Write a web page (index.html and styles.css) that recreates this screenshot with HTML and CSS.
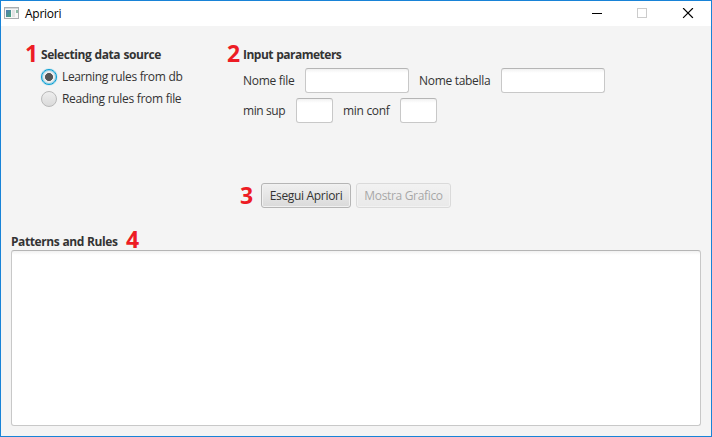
FILE: index.html
```html
<!DOCTYPE html>
<html lang="it">
<head>
<meta charset="utf-8">
<title>Apriori</title>
<link rel="stylesheet" href="styles.css">
</head>
<body>
<div class="window">
  <header class="titlebar">
    <svg class="app-icon" width="15" height="12" viewBox="0 0 15 12">
      <defs><linearGradient id="g" x1="0" y1="0" x2="1" y2="1"><stop offset="0" stop-color="#5279b5"/><stop offset="1" stop-color="#45a77c"/></linearGradient></defs>
      <rect x=".5" y=".5" width="14" height="11" fill="#f7f7f7" stroke="#a9adb0"/>
      <path d="M1 1.5h13" stroke="#d4d7d9"/>
      <rect x="2" y="3" width="5" height="7" fill="url(#g)"/>
      <rect x="8" y="3" width="3" height="7" fill="#e1e3e4"/>
      <rect x="12" y="3" width="2" height="3" fill="#8bbba6"/>
    </svg>
    <span class="title">Apriori</span>
    <svg class="controls" width="102" height="11" viewBox="0 0 102 11" fill="none">
      <path d="M0 5.5h10" stroke="#000" shape-rendering="crispEdges"/>
      <rect x="45.500" y=".5" width="9" height="9" stroke="#ccc"/>
      <path d="M91.500 .5l9 9M100.500 .5l-9 9" stroke="#000" stroke-width="1.15" stroke-linecap="square"/>
    </svg>
  </header>
  <main class="content">
    <div class="top">
      <section class="source">
        <h2><b class="num">1</b><span>Selecting data source</span></h2>
        <div class="option"><i class="radio selected"></i><span>Learning rules from db</span></div>
        <div class="option"><i class="radio"></i><span class="reading">Reading rules from file</span></div>
      </section>
      <section class="params">
        <h2><b class="num">2</b><span class="heading-input">Input parameters</span></h2>
        <div class="fields">
          <label class="l-file">Nome file</label><input class="wide">
          <label class="l-table">Nome tabella</label><input class="wide">
        </div>
        <div class="fields">
          <label class="l-sup">min sup</label><input>
          <label class="l-conf">min conf</label><input>
        </div>
      </section>
    </div>
    <div class="actions">
      <b class="num">3</b>
      <button class="run">Esegui Apriori</button>
      <button class="chart" disabled>Mostra Grafico</button>
    </div>
    <h2 class="results"><span>Patterns and Rules</span><b class="num">4</b></h2>
    <textarea></textarea>
  </main>
</div>
</body>
</html>
```

FILE: styles.css
```css
* { box-sizing: border-box; }
body { margin: 0; overflow: hidden; font: 12px/16px "Open Sans", "Noto Sans", sans-serif; color: #333; }
.window { width: 712px; height: 437px; border: 1px solid #1883d7; background: #f4f4f4; display: flex; flex-direction: column; }
.titlebar { height: 25px; flex: none; background: #fff; display: flex; align-items: flex-start; padding: 5px 17px 0 3px; color: #000; }
.app-icon { margin-top: 1px; }
.title { margin-left: 6px; letter-spacing: -.25px; }
.controls { margin-left: auto; margin-top: 2px; }
.content { flex: 1; padding: 20px 10px 10px; display: flex; flex-direction: column; }
.top { display: flex; height: 137px; flex: none; }
.source { width: 202px; padding-left: 14px; }
.params { padding-left: 14px; }
h2 { margin: 0; font-size: 12px; line-height: 18px; height: 20px; display: flex; white-space: nowrap; }
h2 span { letter-spacing: -.42px; word-spacing: .5px; }
.heading-input { letter-spacing: -.5px; }
.num { color: #ed1c24; font: 700 23px/18px "Open Sans", sans-serif; width: 16px; flex: none; margin-top: -2px; }
.option { height: 22px; display: flex; align-items: center; padding-left: 16px; white-space: nowrap; letter-spacing: -.37px; word-spacing: .2px; }
.reading { letter-spacing: -.33px; }
.radio { width: 16px; height: 16px; border-radius: 50%; border: 1px solid #b9b9b9; background: linear-gradient(#eee, #dadada); margin-right: 5px; }
.radio.selected { border-color: #039ed3; box-shadow: inset 0 0 0 1px #8fd0e8, 0 0 1px #039ed3; background: radial-gradient(circle, #555 0 3.7px, #ececec 4.3px); }
.fields { display: flex; align-items: center; height: 25px; margin: 2px 0 5px 16px; white-space: nowrap; }
.fields + .fields { margin-top: 0; }
label { flex: none; letter-spacing: -.3px; }
.l-file { width: 62px; }
.l-table { width: 82px; margin-left: 10px; }
.l-sup { width: 53px; letter-spacing: -.4px; }
.l-conf { width: 57px; margin-left: 10px; }
input { width: 37px; height: 25px; padding: 0 7px; }
.wide { width: 104px; }
input, textarea { border: 1px solid #c8c8c8; border-top-color: #b5b5b5; border-radius: 3px; background: #fff linear-gradient(#f1f1f1, #fff 4px) no-repeat; outline: 0; margin: 0; }
.actions { display: flex; align-items: center; height: 25px; margin: 0 0 0 229px; flex: none; }
.actions .num { width: 21px; }
button { height: 25px; padding: 0; font: inherit; color: #333; white-space: nowrap; border: 1px solid #b5b5b5; border-radius: 3px; background: linear-gradient(#f0f0f0, #dadada); box-shadow: inset 0 0 0 1px #f1f1f1; }
.run { width: 90px; letter-spacing: -.32px; }
.chart { width: 95px; margin-left: 5px; opacity: .4; letter-spacing: -.33px; }
.results { margin-top: 25px; height: 17px; flex: none; }
.results span { width: 115px; }
.results .num { margin-top: -3px; }
textarea { display: block; width: 690px; height: 176px; resize: none; flex: none; }
```
